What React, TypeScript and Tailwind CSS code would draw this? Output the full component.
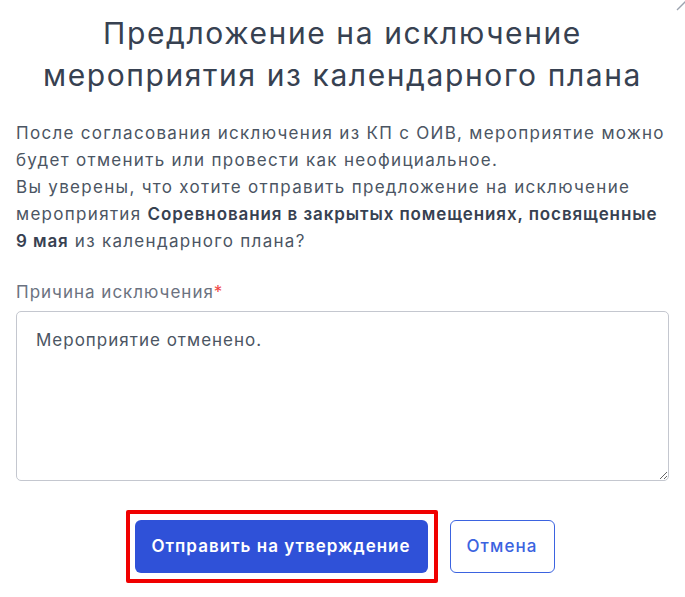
import React from "react";

export default function App() {
  return (
    <div
      className="relative w-[685px] h-[597px] bg-white overflow-hidden"
      style={{ fontFamily: "Inter, 'Noto Sans', sans-serif" }}
    >
      <svg className="absolute right-0 top-0" width="14" height="14" viewBox="0 0 14 14">
        <line x1="6" y1="10" x2="16" y2="0" stroke="#9ca3af" strokeWidth="1.3" />
      </svg>
      <div className="px-4 pt-[12px]">
        <h1 className="text-center text-[30px] leading-[42px] tracking-[1.6px] text-[#374151] font-normal">
          Предложение на исключение
          <br />
          мероприятия из календарного плана
        </h1>
        <p className="mt-[24px] text-[17px] leading-[27px] tracking-[1.3px] text-[#4b5563]">
          После согласования исключения из КП с ОИВ, мероприятие можно будет отменить или провести как неофициальное.
          <br />
          Вы уверены, что хотите отправить предложение на исключение мероприятия{" "}
          <span className="font-semibold tracking-[0.9px] text-[#374151]">
            Соревнования в закрытых помещениях, посвященные 9{"\u00a0"}мая
          </span>{" "}
          из календарного плана?
        </p>
        <div className="mt-[25px] text-[17px] leading-[24px] tracking-[1px] text-[#6b7280]">
          Причина исключения<span className="text-[#ef4444]">*</span>
        </div>
        <textarea
          className="mt-[7px] block w-full h-[170px] rounded-[5px] border border-[#c4c7cf] px-[19px] py-[16px] text-[17px] leading-[24px] tracking-[1px] text-[#4b5563] outline-none resize-y"
          style={{ fontFamily: "Inter, 'Noto Sans', sans-serif" }}
          defaultValue="Мероприятие отменено."
        />
        <div className="mt-[39px] flex justify-center gap-[22px] pl-[4px]">
          <div className="relative">
            <div className="absolute -left-[9px] -right-[10px] -top-[10px] -bottom-[10px] border-4 border-[#f00000] rounded-[2px]" />
            <button className="relative h-[53px] w-[293px] rounded-[6px] bg-[#2f51d8] text-white text-[17px] tracking-[1px] font-semibold">
              Отправить на утверждение
            </button>
          </div>
          <button className="h-[53px] w-[105px] rounded-[6px] border border-[#3b63e0] bg-white text-[#3b63e0] text-[17px] tracking-[1.1px] font-medium">
            Отмена
          </button>
        </div>
      </div>
    </div>
  );
}
